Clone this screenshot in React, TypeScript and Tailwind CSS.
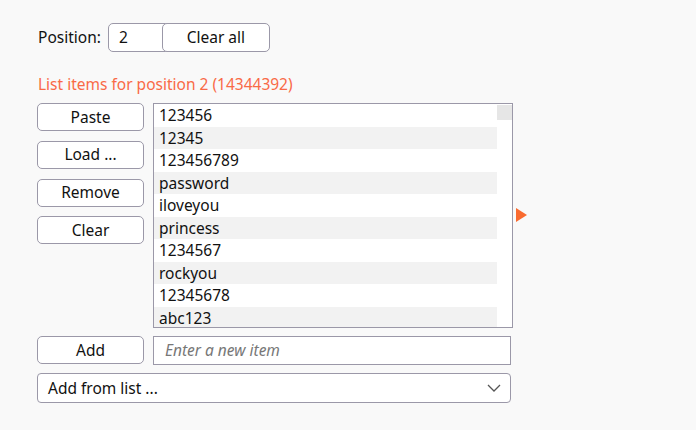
import React from "react";

const items = [
  "123456",
  "12345",
  "123456789",
  "password",
  "iloveyou",
  "princess",
  "1234567",
  "rockyou",
  "12345678",
  "abc123",
];

const SideButton = ({ label }: { label: string }) => (
  <button className="h-[28px] w-[107px] rounded-[5px] border border-[#9b98a8] bg-white text-[#111]">
    {label}
  </button>
);

const App = () => {
  return (
    <div
      className="h-[430px] w-[696px] bg-[#f9f9f9] pl-[37px] pt-[23px] text-[15.5px] text-[#111]"
      style={{ fontFamily: '"Segoe UI", "Noto Sans", sans-serif' }}
    >
      <div className="flex items-center">
        <span className="ml-[1px] mr-[7px]">Position:</span>
        <div className="flex h-[29px] w-[62px] items-center rounded-l-[5px] border border-[#9b98a8] bg-white pl-[10px]">
          2
        </div>
        <button className="-ml-[8px] h-[29px] w-[108px] rounded-[5px] border border-[#9b98a8] bg-white">
          Clear all
        </button>
      </div>

      <div className="ml-[1px] mt-[21px] text-[#f96a47]">
        List items for position 2 (14344392)
      </div>

      <div className="mt-[7px] flex">
        <div className="flex flex-col gap-[9.7px]">
          <SideButton label="Paste" />
          <SideButton label="Load ..." />
          <SideButton label="Remove" />
          <SideButton label="Clear" />
        </div>
        <div className="ml-[9px] flex h-[225px] w-[360px] border border-[#9b98a8] bg-white">
          <div className="flex-1 overflow-hidden">
            {items.map((it, i) => (
              <div
                key={it}
                className={`h-[22.5px] pl-[5px] leading-[22.5px] ${
                  i % 2 === 1 ? "bg-[#f2f2f2]" : "bg-white"
                }`}
              >
                {it}
              </div>
            ))}
          </div>
          <div className="w-[15px]">
            <div className="mt-[1px] h-[15px] w-[15px] bg-[#e6e6e6]" />
          </div>
        </div>
        <div className="ml-[3px] mt-[105px]">
          <svg width="11" height="14" viewBox="0 0 11 14">
            <polygon points="0,0 11,7 0,14" fill="#f96a2f" />
          </svg>
        </div>
      </div>

      <div className="mt-[8px] flex">
        <SideButton label="Add" />
        <div className="ml-[9px] flex h-[29px] w-[358px] items-center border border-[#9b98a8] bg-white pl-[11px] italic text-[#777]">
          Enter a new item
        </div>
      </div>

      <div className="mt-[8px] flex h-[30px] w-[474px] items-center justify-between rounded-[4px] border border-[#9b98a8] bg-white pl-[10px] pr-[8px]">
        <span>Add from list ...</span>
        <svg width="16" height="10" viewBox="0 0 16 10">
          <polyline points="2,2 8,8 14,2" fill="none" stroke="#555" strokeWidth="1.3" />
        </svg>
      </div>
    </div>
  );
};

export default App;
